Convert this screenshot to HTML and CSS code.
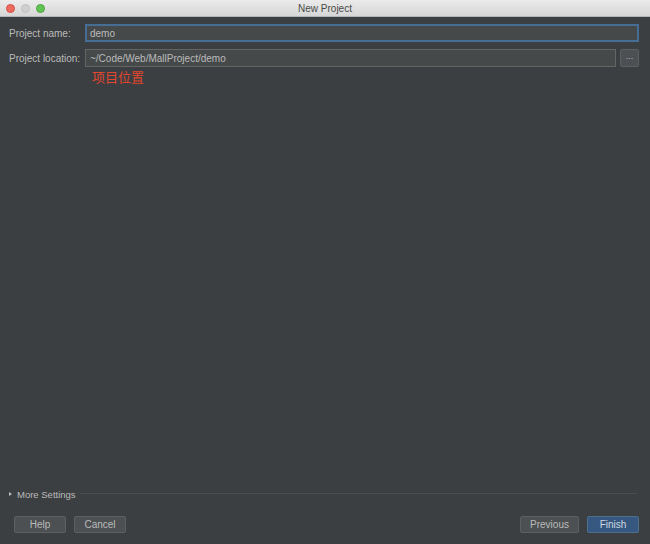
FILE: index.html
```html
<!DOCTYPE html>
<html>
<head>
<meta charset="utf-8">
<link rel="stylesheet" href="styles.css">
</head>
<body>
<div class="window">
  <div class="titlebar">
    <div class="lights">
      <span class="light red"></span>
      <span class="light gray"></span>
      <span class="light green"></span>
    </div>
    <div class="title">New Project</div>
  </div>
  <div class="content">
    <div class="form">
      <div class="row">
        <label class="label">Project name:</label>
        <div class="input focused">demo</div>
      </div>
      <div class="row">
        <label class="label">Project location:</label>
        <div class="input">~/Code/Web/MallProject/demo</div>
        <div class="browse">...</div>
      </div>
      <div class="note">项目位置</div>
    </div>
    <div class="spacer"></div>
    <div class="more">
      <span class="tri"></span>
      <span class="more-text">More Settings</span>
      <span class="sep"></span>
    </div>
    <div class="buttons">
      <div class="group">
        <div class="btn">Help</div>
        <div class="btn">Cancel</div>
      </div>
      <div class="group">
        <div class="btn prev">Previous</div>
        <div class="btn primary">Finish</div>
      </div>
    </div>
  </div>
</div>
</body>
</html>
```

FILE: styles.css
```css
* { box-sizing: border-box; }
html, body { margin: 0; padding: 0; }
body {
  width: 650px;
  height: 544px;
  overflow: hidden;
  font-family: "Liberation Sans", Arial, "Noto Sans CJK SC", sans-serif;
  font-size: 10px;
  color: #bbbbbb;
  background: #3c3f41;
}
.window { width: 650px; height: 544px; display: flex; flex-direction: column; }
.titlebar {
  height: 17px;
  background: linear-gradient(#ebebeb, #d6d6d6);
  border-bottom: 1px solid #b5b5b5;
  display: flex;
  align-items: center;
  position: relative;
}
.lights { display: flex; gap: 6px; padding-left: 6px; }
.light { width: 9px; height: 9px; border-radius: 50%; display: block; }
.light.red { background: #ed6a5e; border: 0.5px solid #d65046; }
.light.gray { background: #cfcfcf; border: 0.5px solid #c0c0c0; }
.light.green { background: #5fc454; border: 0.5px solid #4da33f; }
.title {
  position: absolute; left: 0; right: 0; top: 0; bottom: 0;
  display: flex; align-items: center; justify-content: center;
  color: #4a4a4a; font-size: 10px;
}
.content { flex: 1; display: flex; flex-direction: column; padding: 7px 11px 11px 9px; }
.form { display: flex; flex-direction: column; gap: 7px; }
.row { display: flex; align-items: center; height: 18px; }
.label { width: 76px; color: #bbbbbb; }
.input {
  flex: 1;
  height: 18px;
  background: #45494a;
  border: 1px solid #646464;
  padding: 0 4px;
  display: flex; align-items: center;
  color: #bbbbbb;
}
.input.focused {
  border: 2px solid #466d94;
  padding: 0 3px;
}
.browse {
  width: 19px; height: 18px; margin-left: 4px;
  background: #4c5052;
  border: 1px solid #5e6060;
  border-radius: 2px;
  display: flex; align-items: center; justify-content: center;
  font-size: 9px; line-height: 1; padding-bottom: 3px;
}
.note {
  margin-top: -6px;
  padding-left: 83px;
  color: #e2462e;
  font-size: 13px;
  font-family: "Noto Sans CJK SC", sans-serif;
  line-height: 18px;
}
.spacer { flex: 1; }
.more { display: flex; align-items: center; height: 12px; margin-bottom: 16px; }
.tri {
  width: 0; height: 0;
  border-top: 2.5px solid transparent;
  border-bottom: 2.5px solid transparent;
  border-left: 3.5px solid #bbbbbb;
  margin-right: 5px;
}
.more-text { font-size: 9.5px; }
.sep { flex: 1; height: 1px; background: #4a4e50; margin-left: 4px; margin-right: 2px; margin-top: -2px; }
.buttons { display: flex; justify-content: space-between; padding-left: 5px; }
.group { display: flex; gap: 8px; }
.btn {
  width: 52px; height: 17px;
  background: #4c5052;
  border: 1px solid #5e6060;
  border-radius: 2px;
  display: flex; align-items: center; justify-content: center;
  color: #bbbbbb;
}
.btn.prev { width: 59px; }
.btn.primary { background: #365880; border-color: #4c708c; color: #d0d8e0; }
```
